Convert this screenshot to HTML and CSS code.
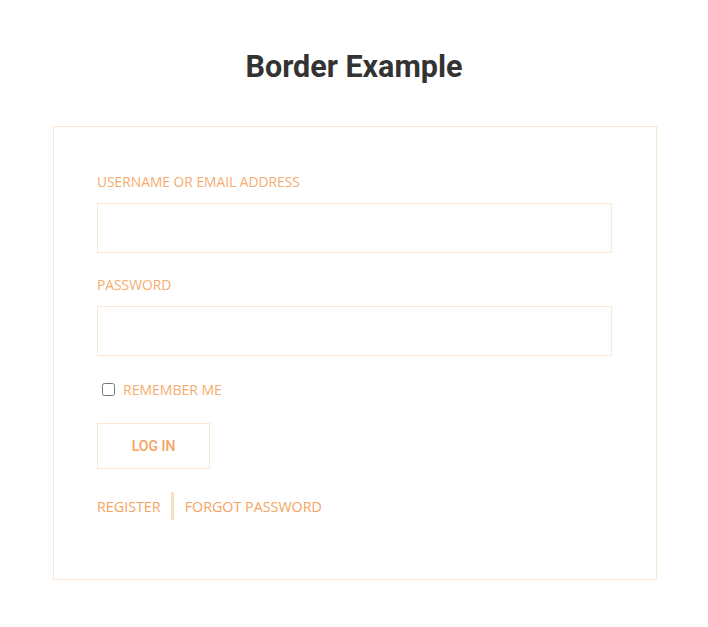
FILE: index.html
```html
<!DOCTYPE html>
<html>
<head>
<meta charset="utf-8">
<link rel="stylesheet" href="styles.css">
</head>
<body>
<h1 class="title">Border Example</h1>
<div class="card">
  <form class="login">
    <label class="field-label" for="user">Username or Email Address</label>
    <input class="field-input" id="user" type="text">
    <label class="field-label second" for="pass">Password</label>
    <input class="field-input" id="pass" type="password">
    <label class="remember"><input type="checkbox" class="check"> <span>Remember Me</span></label>
    <button class="btn" type="button">Log In</button>
    <div class="links">
      <a class="link">Register</a>
      <span class="sep"></span>
      <a class="link">Forgot Password</a>
    </div>
  </form>
</div>
</body>
</html>
```

FILE: styles.css
```css
html, body {
  margin: 0;
  padding: 0;
  background: #ffffff;
}
body {
  font-family: "Open Sans", "Liberation Sans", sans-serif;
}
.title {
  margin: 0 0 40px;
  padding-top: 48px;
  text-align: center;
  font-family: Roboto, "Liberation Sans", sans-serif;
  font-weight: 700;
  font-size: 30.5px;
  line-height: 38px;
  color: #333333;
}
.card {
  margin: 0 0 0 53px;
  width: 604px;
  height: 454px;
  box-sizing: border-box;
  border: 1px solid #fbe8d2;
  padding: 45px 44px 0 43px;
}
.login {
  display: flex;
  flex-direction: column;
  align-items: flex-start;
}
.field-label {
  display: block;
  font-size: 13.8px;
  font-weight: 400;
  line-height: 20px;
  color: #f5ac70;
  text-transform: uppercase;
  margin-bottom: 11px;
}
.field-label.second {
  margin-top: 22px;
}
.field-input {
  display: block;
  width: 100%;
  height: 50px;
  box-sizing: border-box;
  border: 1px solid #fbe8d2;
  margin: 0;
  padding: 0 10px;
  outline: none;
  background: #fff;
}
.remember {
  display: flex;
  align-items: center;
  margin-top: 23px;
  height: 20px;
  font-size: 14px;
  font-weight: 400;
  color: #f5ac70;
  text-transform: uppercase;
}
.check {
  width: 13px;
  height: 13px;
  margin: 0 8px 0 5px;
}
.btn {
  margin-top: 24px;
  width: 113px;
  height: 46px;
  border: 1px solid #fbe8d2;
  background: #fff;
  color: #f4a460;
  font-family: Roboto, "Liberation Sans", sans-serif;
  font-weight: 500;
  font-size: 14px;
  text-transform: uppercase;
  padding: 0;
}
.links {
  margin-top: 23px;
  display: flex;
  align-items: center;
  height: 28px;
}
.link {
  font-size: 14.3px;
  font-weight: 400;
  color: #f4a460;
  text-transform: uppercase;
}
.sep {
  width: 3px;
  height: 28px;
  background: #fbe0c0;
  margin: 0 11px 0 10px;
}
```
